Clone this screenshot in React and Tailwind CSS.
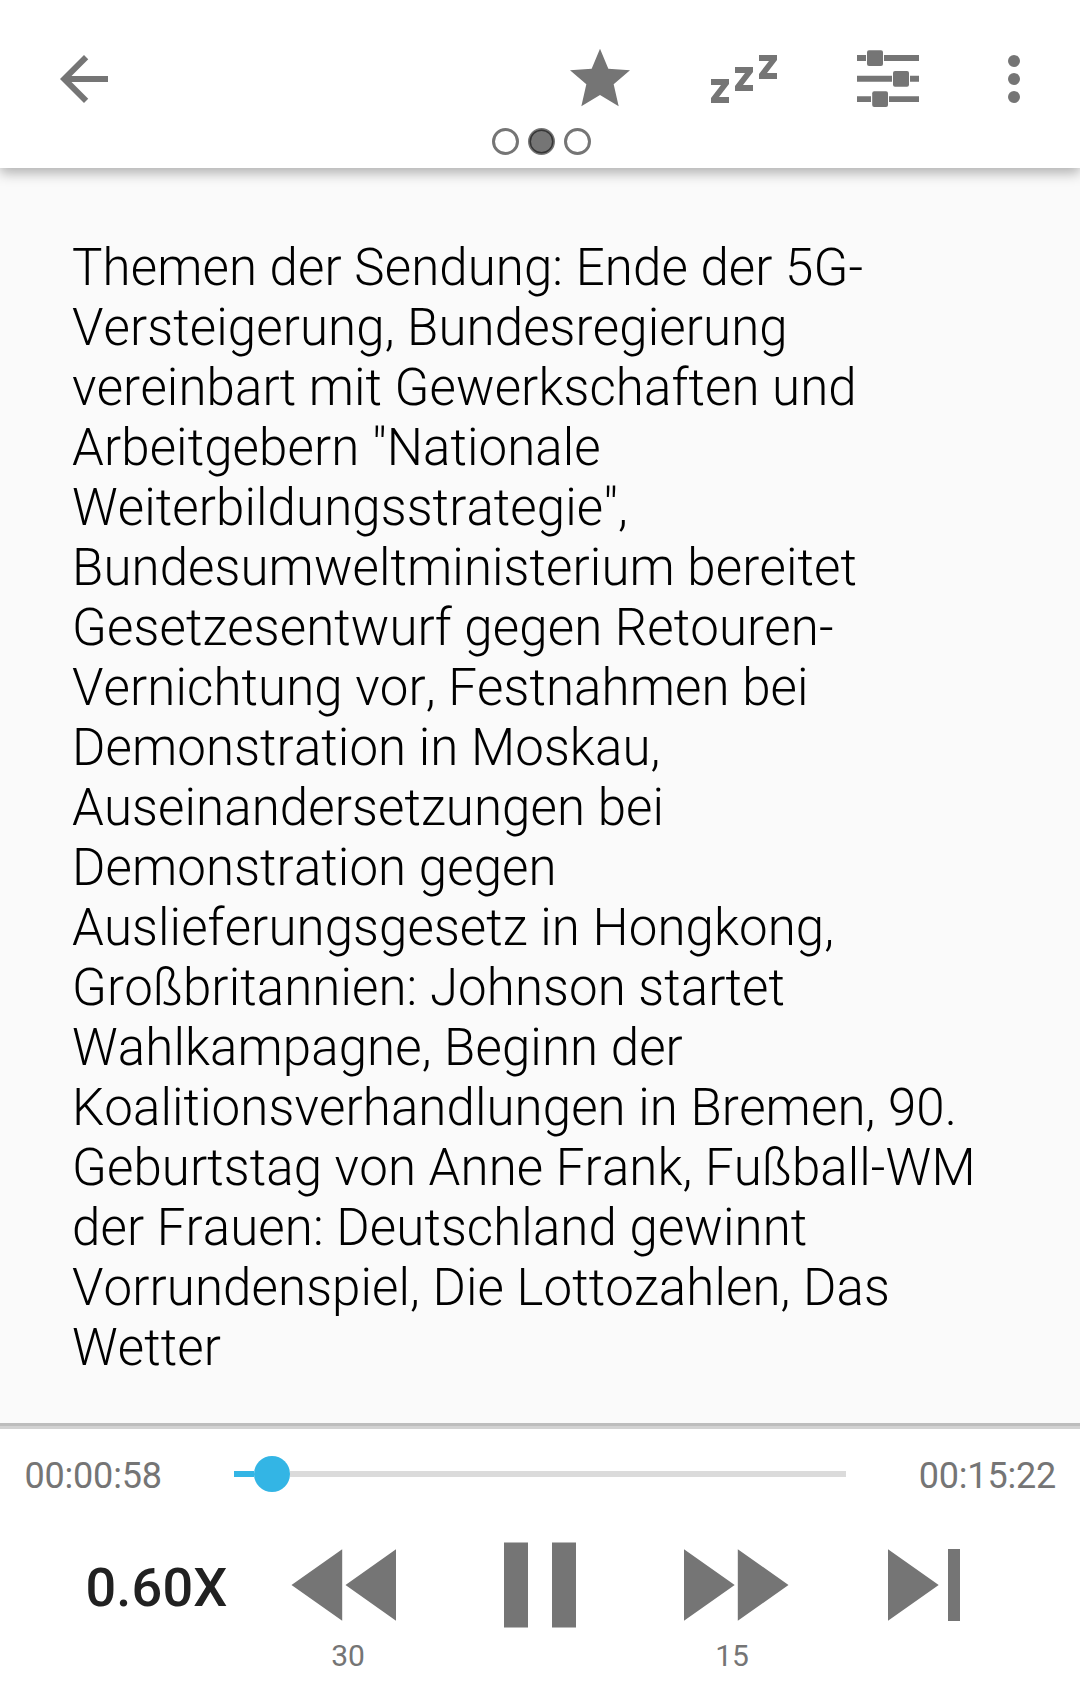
const lines = [
  'Themen der Sendung: Ende der 5G-',
  'Versteigerung, Bundesregierung',
  'vereinbart mit Gewerkschaften und',
  'Arbeitgebern "Nationale',
  'Weiterbildungsstrategie",',
  'Bundesumweltministerium bereitet',
  'Gesetzesentwurf gegen Retouren-',
  'Vernichtung vor, Festnahmen bei',
  'Demonstration in Moskau,',
  'Auseinandersetzungen bei',
  'Demonstration gegen',
  'Auslieferungsgesetz in Hongkong,',
  'Großbritannien: Johnson startet',
  'Wahlkampagne, Beginn der',
  'Koalitionsverhandlungen in Bremen, 90.',
  'Geburtstag von Anne Frank, Fußball-WM',
  'der Frauen: Deutschland gewinnt',
  'Vorrundenspiel, Die Lottozahlen, Das',
  'Wetter',
];

function IconButton({ label, children, viewBox = '0 0 72 72', className = '' }) {
  return (
    <button aria-label={label} className={`size-[72px] shrink-0 ${className}`}>
      <svg viewBox={viewBox} className="block size-full fill-[#757575]">{children}</svg>
    </button>
  );
}

function Header() {
  return (
    <header className="relative z-10 flex h-[168px] shrink-0 flex-col bg-white shadow-[0_5px_12px_rgba(0,0,0,0.3)]">
      <div className="flex pt-[43px] pr-[30px] pl-12">
        <IconButton label="Zurück" viewBox="0 0 24 24" className="mr-auto">
          <path d="M20 11H7.83l5.59-5.59L12 4l-8 8 8 8 1.41-1.41L7.83 13H20z" />
        </IconButton>
        <IconButton label="Favorit" viewBox="0 0 216 216" className="mr-[72px]">
          <path d="M108 17 133 77 198 82 149 124 164 190 108 156 52 190 67 124 18 82 83 77z" />
        </IconButton>
        <IconButton label="Schlummerfunktion" className="mr-[72px]">
          <path d="M3 36h18v5L11 54H21v6H3v-5L13 42H3z" />
          <path d="M27 24h18v5L35 42H45v6H27v-5L37 30H27z" />
          <path d="M51 12h18v5L59 30H69v6H51v-5L61 18H51z" />
        </IconButton>
        <IconButton label="Audio" className="mr-[54px]">
          <path d="M5 12h9v6H5zM32 12h35v6H32zM5 32.700h35v6H5zM58 32.700h9v6h-9zM5 53.300h14v5.700H5zM37 53.300h30v5.700H37z" />
          <rect x="15" y="7.200" width="16" height="15.800" rx="2" />
          <rect x="41" y="28" width="16" height="15.800" rx="2" />
          <rect x="20.200" y="48.300" width="15.800" height="15.800" rx="2" />
        </IconButton>
        <IconButton label="Mehr">
          <circle cx="36" cy="18" r="6" />
          <circle cx="36" cy="36" r="6" />
          <circle cx="36" cy="54" r="6" />
        </IconButton>
      </div>
      <svg viewBox="0 0 108 27" className="mt-[13px] ml-[492px] h-[27px] w-[108px] shrink-0 fill-none stroke-black/54" strokeWidth="3">
        <circle cx="13.500" cy="13.500" r="12" />
        <circle cx="49.500" cy="13.500" r="12" className="fill-black/54" />
        <circle cx="85.500" cy="13.500" r="12" />
      </svg>
    </header>
  );
}

function Control({ label, caption, children }) {
  return (
    <button aria-label={label} className="flex flex-col items-center pt-3">
      <svg viewBox="0 0 108 108" className="block size-[108px] overflow-visible fill-[#757575]">{children}</svg>
      {caption && <span className="mt-[2px] text-[30px] leading-[30px] text-[#757575]">{caption}</span>}
    </button>
  );
}

export default function App() {
  return (
    <div className="flex h-[1699px] w-[1080px] flex-col overflow-hidden bg-[#fafafa] font-['Roboto',sans-serif]">
      <Header />
      <main className="h-[1255px] shrink-0 pt-[70px] pl-[72px]">
        <p className="text-[51px] leading-[60px] font-light tracking-[0.1px] whitespace-pre text-black [font-kerning:none]">
          {lines.map((line) => (
            <span key={line} className="block">{line}</span>
          ))}
        </p>
      </main>
      <div className="h-[3px] shrink-0 bg-[#bdbdbd]" />
      <div className="h-[3px] shrink-0 bg-[#d2d2d2]" />
      <footer className="h-[270px] shrink-0 bg-white">
        <div className="flex h-[90px] items-center justify-between px-6 text-[36px] leading-[42px] tracking-[-0.2px] text-[#757575]">
          <span className="mt-1 w-[139px] pl-[0.5px]">00:00:58</span>
          <div className="flex w-[612px] items-center">
            <div className="h-1.5 w-5 bg-[#33b5e5]" />
            <div className="size-9 rounded-full bg-[#33b5e5]" />
            <div className="h-1.5 grow bg-[#dbdbdb]" />
          </div>
          <span className="mt-1 w-[139px] text-right">00:15:22</span>
        </div>
        <div className="grid grid-cols-5 px-[60px]">
          <button className="flex h-[132px] items-center justify-center pt-[5px] pl-[1px] text-[54px] leading-[64px] font-medium tracking-[0.2px] text-[#212121]">
            0.60X
          </button>
          <Control label="Zurückspulen" caption="30">
            <path d="M-2.500 54 48.200 18.300V89.700zM51.500 54 102 18.300V89.700z" />
          </Control>
          <Control label="Pause">
            <path d="M18 11.400h24v85.200H18zM66 11.400h24v85.200H66z" />
          </Control>
          <Control label="Vorspulen" caption="15">
            <path d="M6 18.300 56.700 54 6 89.700zM59.800 18.300 110.500 54 59.800 89.700z" />
          </Control>
          <Control label="Nächste Folge">
            <path d="M18 18.300 68.700 54 18 89.700zM78 18h12v72H78z" />
          </Control>
        </div>
      </footer>
    </div>
  );
}
